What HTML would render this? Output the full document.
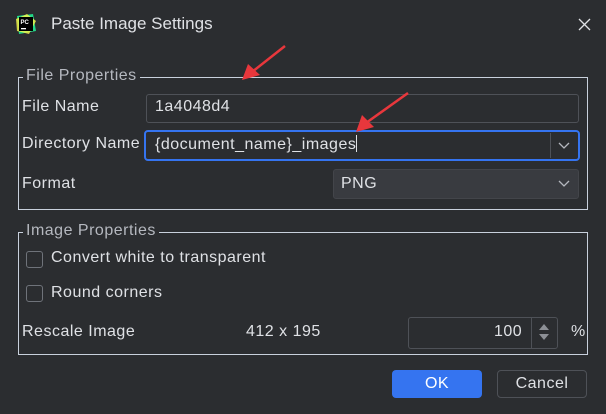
<!DOCTYPE html>
<html><head><style>
body{margin:0;width:606px;height:414px;background:#2b2d30;font-family:"Liberation Sans",sans-serif;color:#dfe1e5;font-size:16px;letter-spacing:0.5px;position:relative;overflow:hidden}
.a{position:absolute}
.frame{position:absolute;border:1px solid #c8d0dc}
.leg{position:absolute;background:#2b2d30;padding:0 3px;color:#b5b8bf;font-size:16px}
.field{position:absolute;border:1px solid #4e5157;border-radius:3px;background:#2b2d30}
.cb{position:absolute;width:15px;height:15px;border:1px solid #6f737a;border-radius:3px}
</style></head><body>
<svg class="a" style="left:15px;top:13px" width="22" height="22" viewBox="0 0 22 22">
<path d="M2 3 L18 1 L21 18 L4 21 Z" fill="#21d789"/><path d="M1 6 L12 1 L21 8 L14 21 L2 18Z" fill="#fcf84a" opacity=".8"/>
<rect x="4" y="4" width="14" height="14" fill="#000"/>
<text x="5.5" y="11" font-size="6" fill="#fff" font-family="Liberation Sans" font-weight="bold" letter-spacing="0">PC</text>
<rect x="6" y="15" width="5" height="1.3" fill="#fff"/></svg>
<div class="a" style="left:51px;top:14px;font-size:17px;letter-spacing:0;color:#dfe1e5">Paste Image Settings</div>
<svg class="a" style="left:578px;top:18px" width="13" height="13"><path d="M1 1L12 12M12 1L1 12" stroke="#dfe1e5" stroke-width="1.3"/></svg>

<div class="frame" style="left:18px;top:77px;width:568px;height:131px"></div>
<div class="leg" style="left:23px;top:67px">File Properties</div>
<div class="a" style="left:22px;top:98px">File Name</div>
<div class="field" style="left:146px;top:94px;width:431px;height:27px"></div>
<div class="a" style="left:155px;top:98px">1a4048d4</div>
<div class="a" style="left:22px;top:135px">Directory Name</div>
<div class="field" style="left:144px;top:130px;width:432px;height:27px;border:2px solid #3574f0;border-radius:4px"></div>
<div class="a" style="left:550px;top:133px;width:1px;height:25px;background:#4e5157"></div>
<div class="a" style="left:155px;top:135px">{document_name}_images<span style="display:inline-block;width:1px;height:17px;background:#dfe1e5;vertical-align:-3px"></span></div>
<svg class="a" style="left:558px;top:142px" width="12" height="8"><path d="M1 1L6 6L11 1" stroke="#b5b8bf" fill="none" stroke-width="1.3"/></svg>
<div class="a" style="left:22px;top:175px">Format</div>
<div class="field" style="left:333px;top:169px;width:244px;height:28px;background:#393b40;border-color:#43454a"></div>
<div class="a" style="left:341px;top:175px">PNG</div>
<svg class="a" style="left:558px;top:180px" width="12" height="8"><path d="M1 1L6 6L11 1" stroke="#b5b8bf" fill="none" stroke-width="1.3"/></svg>

<div class="frame" style="left:18px;top:232px;width:568px;height:121px"></div>
<div class="leg" style="left:23px;top:222px">Image Properties</div>
<div class="cb" style="left:26px;top:251px"></div>
<div class="a" style="left:51px;top:249px">Convert white to transparent</div>
<div class="cb" style="left:26px;top:285px"></div>
<div class="a" style="left:51px;top:284px">Round corners</div>
<div class="a" style="left:22px;top:323px">Rescale Image</div>
<div class="a" style="left:246px;top:323px">412 x 195</div>
<div class="field" style="left:408px;top:317px;width:148px;height:30px"></div>
<div class="a" style="left:531px;top:318px;width:1px;height:30px;background:#4e5157"></div>
<div class="a" style="left:494px;top:323px">100</div>
<svg class="a" style="left:538px;top:321px" width="12" height="22"><path d="M1 9L6 3L11 9Z M1 13L6 19L11 13Z" fill="#8c8f95"/></svg>
<div class="a" style="left:571px;top:323px">%</div>

<div class="a" style="left:392px;top:370px;width:90px;height:28px;background:#3574f0;border-radius:4px;color:#fff;text-align:center;line-height:28px">OK</div>
<div class="a" style="left:497px;top:370px;width:88px;height:26px;border:1px solid #4e5157;border-radius:4px;text-align:center;line-height:26px">Cancel</div>

<svg class="a" style="left:240px;top:44px" width="50" height="40"><path d="M45 2L12 28" stroke="#e8373c" stroke-width="2.5"/><path d="M2 36L8 20L20 31Z" fill="#e8373c"/></svg>
<svg class="a" style="left:352px;top:90px" width="60" height="48"><path d="M56 3L14 33" stroke="#e8373c" stroke-width="2.5"/><path d="M4 42L10 25L22 37Z" fill="#e8373c"/></svg>
</body></html>
